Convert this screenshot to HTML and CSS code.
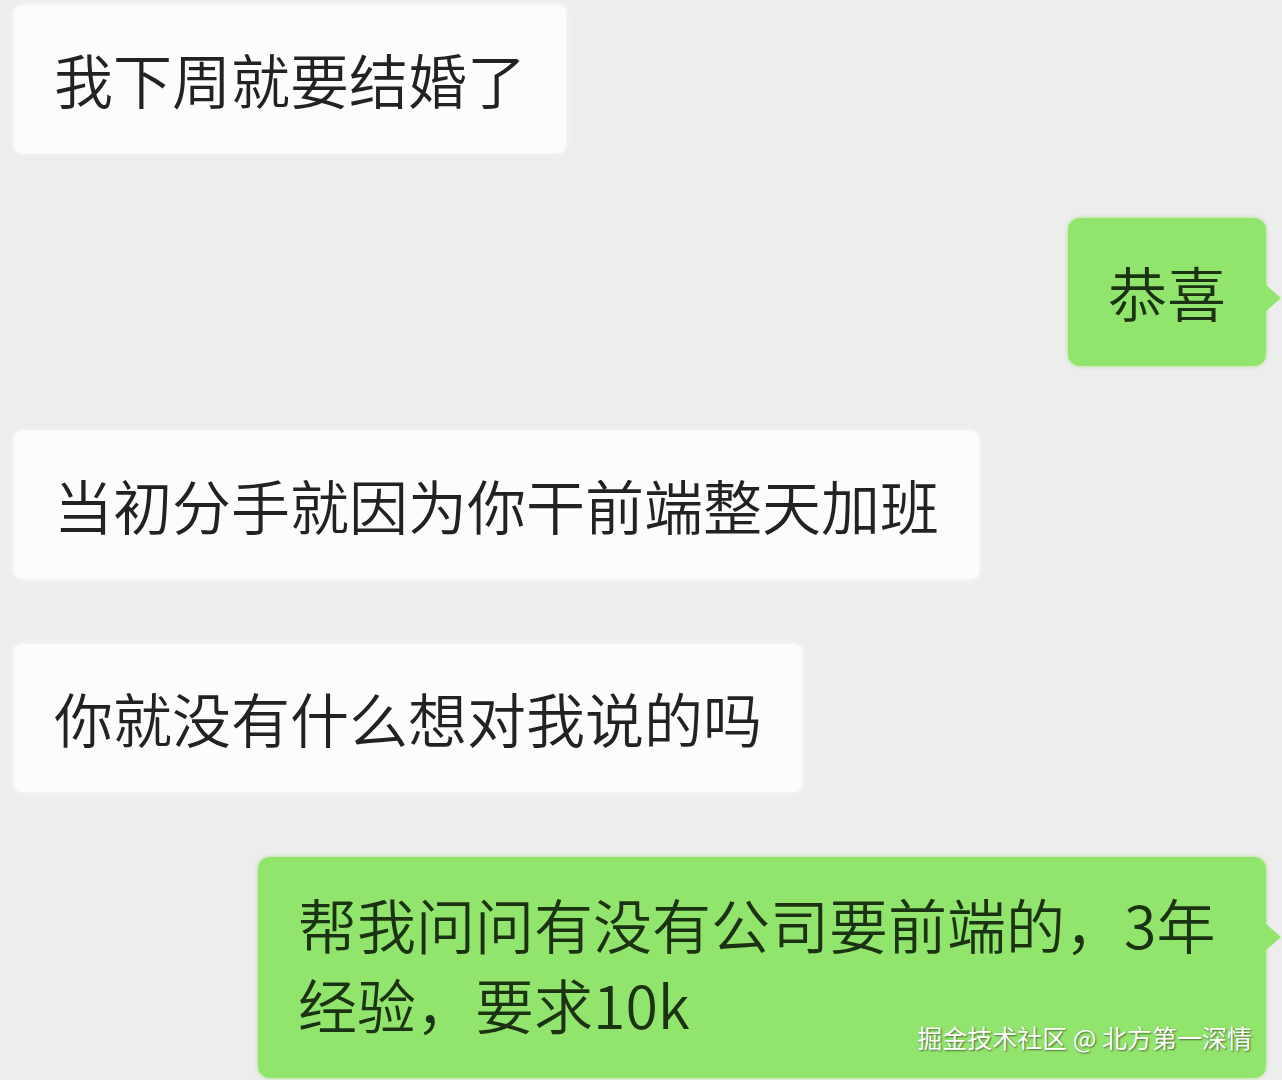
FILE: index.html
```html
<!DOCTYPE html>
<html lang="zh-CN">
<head>
<meta charset="utf-8">
<meta name="viewport" content="width=device-width, initial-scale=1.0">
<title>聊天记录</title>
<link rel="stylesheet" href="styles.css">
</head>
<body>
<div class="chat">
  <div class="row row-left">
    <div class="bubble bubble-white">我下周就要结婚了</div>
  </div>
  <div class="row row-right">
    <div class="bubble bubble-green">恭喜</div>
  </div>
  <div class="row row-left">
    <div class="bubble bubble-white">当初分手就因为你干前端整天加班</div>
  </div>
  <div class="row row-left">
    <div class="bubble bubble-white">你就没有什么想对我说的吗</div>
  </div>
  <div class="row row-right">
    <div class="bubble bubble-green bubble-wide">帮我问问有没有公司要前端的，3年经验，要求10k</div>
  </div>
</div>
<!-- 水印 -->
<div class="watermark">掘金技术社区 @ 北方第一深情</div>
</body>
</html>
```

FILE: styles.css
```css
* {
  box-sizing: border-box;
}

body {
  margin: 0;
  background: #ededed;
  font-family: "Noto Sans CJK SC", "Noto Sans", sans-serif;
  height: 1080px;
  overflow: hidden;
}

.chat {
  display: flex;
  flex-direction: column;
  gap: 65px;
  padding: 5px 16px 0 14px;
}

.row {
  display: flex;
}

.row-left {
  justify-content: flex-start;
}

.row-right {
  justify-content: flex-end;
}

.bubble {
  position: relative;
  font-size: 59px;
  font-weight: 350;
  line-height: 80px;
  padding: 34px 40px 34px 40px;
  border-radius: 8px;
}

.bubble-white {
  background: #fcfcfc;
  color: #222222;
  box-shadow: 0 0 6px rgba(255, 255, 255, 0.9);
}

.bubble-green {
  background: #92e56c;
  color: #1b3312;
  border-radius: 12px;
  box-shadow: 0 0 4px rgba(140, 225, 100, 0.7);
}

/*cola de la burbuja verde*/
.bubble-green::after {
  content: "";
  position: absolute;
  right: -15px;
  top: 66px;
  border-top: 14px solid transparent;
  border-bottom: 14px solid transparent;
  border-left: 16px solid #92e56c;
}

.bubble-wide {
  width: 1008px;
  padding: 27px 40px 34px 40px;
}

.watermark {
  position: absolute;
  right: 30px;
  top: 1020px;
  font-size: 25px;
  line-height: 34px;
  color: #ffffff;
  text-shadow: 1px 1px 2px rgba(0, 0, 0, 0.55);
}
```
